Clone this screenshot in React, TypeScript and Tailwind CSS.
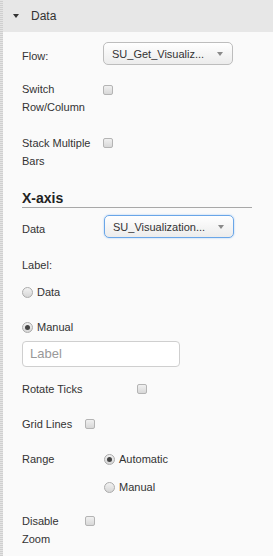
import React from "react";

const font = { fontFamily: '"Liberation Sans", Arial, sans-serif' };

function Checkbox({ className = "" }: { className?: string }) {
  return (
    <span
      className={`block w-[10px] h-[10px] rounded-[2px] border border-[#b4b4b4] bg-gradient-to-b from-[#f0f0f0] to-[#d8d8d8] shrink-0 ${className}`}
    />
  );
}

function Radio({ checked = false }: { checked?: boolean }) {
  return (
    <span className="flex items-center justify-center w-[11px] h-[11px] rounded-full border border-[#ababab] bg-gradient-to-b from-[#f2f2f2] to-[#d6d6d6] shrink-0">
      {checked && <span className="block w-[5px] h-[5px] rounded-full bg-[#444]" />}
    </span>
  );
}

function Select({ value, focused = false }: { value: string; focused?: boolean }) {
  return (
    <div
      className={`flex items-center justify-between w-[130px] h-[23px] pl-[8px] pr-[9px] rounded-[5px] border bg-gradient-to-b from-[#ffffff] to-[#ececec] text-[11px] text-[#333] ${
        focused
          ? "border-[#6aa6e8] shadow-[0_0_2px_#9cc6f2]"
          : "border-[#bdbdbd]"
      }`}
    >
      <span className="truncate">{value}</span>
      <span className="block w-0 h-0 border-l-[3px] border-r-[3px] border-t-[4px] border-l-transparent border-r-transparent border-t-[#8a8a8a] ml-2" />
    </div>
  );
}

export default function App() {
  return (
    <div
      className="flex w-[273px] h-[556px] bg-[#fafafa] text-[#333] overflow-hidden"
      style={font}
    >
      <div className="w-[3px] shrink-0 bg-[repeating-linear-gradient(0deg,#cfcfcf_0px,#cfcfcf_1px,#e4e4e4_1px,#e4e4e4_2px)]" />
      <div className="flex-1 flex flex-col">
        <div className="flex items-center h-[32px] bg-[#e7e7e7] pl-[10px]">
          <span className="block w-0 h-0 border-l-[3px] border-r-[3px] border-t-[4px] border-l-transparent border-r-transparent border-t-[#333]" />
          <span className="ml-[12px] text-[12px] text-[#333]">Data</span>
        </div>

        <div className="pl-[19px] text-[11px] leading-[18px]">
          {/* Flow */}
          <div className="flex mt-[10px]">
            <div className="w-[81px] pt-[5px]">Flow:</div>
            <Select value="SU_Get_Visualiz..." />
          </div>

          {/* Switch Row/Column */}
          <div className="flex mt-[15px]">
            <div className="w-[81px]">
              Switch
              <br />
              Row/Column
            </div>
            <Checkbox className="mt-[5px]" />
          </div>

          {/* Stack Multiple Bars */}
          <div className="flex mt-[18px]">
            <div className="w-[81px]">
              Stack Multiple
              <br />
              Bars
            </div>
            <Checkbox className="mt-[4px]" />
          </div>

          {/* X-axis */}
          <div className="w-[230px] mt-[19px] border-b border-[#a8a8a8] text-[14px] font-bold leading-[18px] text-[#222]">
            X-axis
          </div>

          <div className="flex mt-[7px]">
            <div className="w-[82px] pt-[5px]">Data</div>
            <Select value="SU_Visualization..." focused />
          </div>

          <div className="mt-[18px]">Label:</div>

          <div className="flex items-center mt-[9px]">
            <Radio />
            <span className="ml-[4px]">Data</span>
          </div>

          <div className="flex items-center mt-[17px]">
            <Radio checked />
            <span className="ml-[4px]">Manual</span>
          </div>

          <div className="mt-[5px] w-[158px] h-[26px] flex items-center pl-[7px] rounded-[4px] border border-[#cfcfcf] bg-white text-[13px] text-[#999]">
            Label
          </div>

          <div className="flex mt-[13px]">
            <div className="w-[115px]">Rotate Ticks</div>
            <Checkbox className="mt-[4px]" />
          </div>

          <div className="flex mt-[17px]">
            <div className="w-[63px]">Grid Lines</div>
            <Checkbox className="mt-[4px]" />
          </div>

          <div className="flex mt-[17px]">
            <div className="w-[82px]">Range</div>
            <div className="flex items-center">
              <Radio checked />
              <span className="ml-[4px]">Automatic</span>
            </div>
          </div>

          <div className="flex items-center mt-[10px] ml-[82px]">
            <Radio />
            <span className="ml-[4px]">Manual</span>
          </div>

          <div className="flex mt-[16px]">
            <div className="w-[63px]">
              Disable
              <br />
              Zoom
            </div>
            <Checkbox className="mt-[4px]" />
          </div>
        </div>
      </div>
    </div>
  );
}
